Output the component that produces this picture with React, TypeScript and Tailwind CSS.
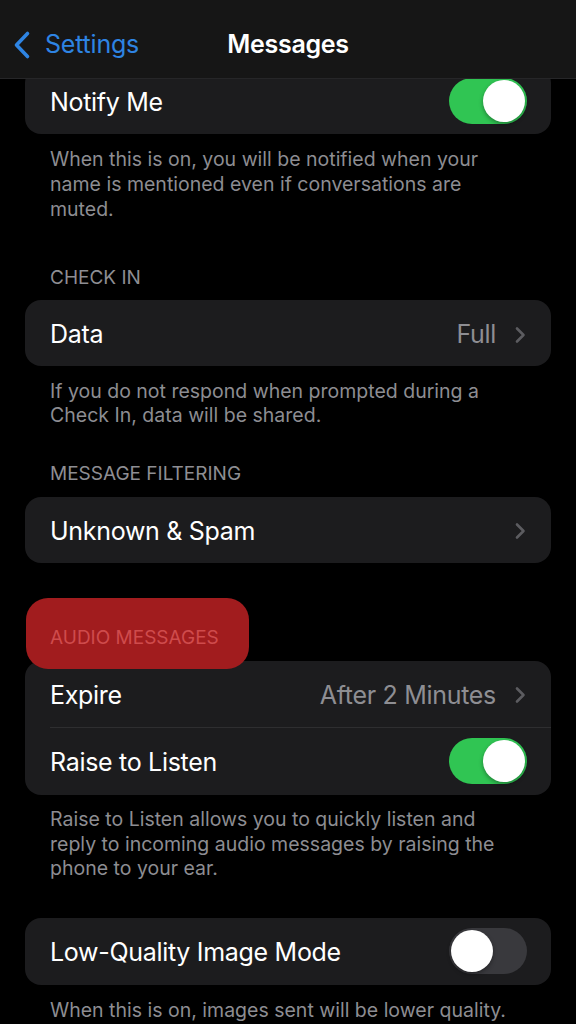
import React from "react";

const font = { fontFamily: "Inter, 'Noto Sans', 'Liberation Sans', sans-serif" };

function Toggle({ on }: { on: boolean }) {
  return (
    <div
      className={`flex h-[46px] w-[78px] items-center rounded-full p-[2px] ${
        on ? "justify-end bg-[#30c553]" : "justify-start bg-[#39393d]"
      }`}
    >
      <div className="h-[42px] w-[42px] rounded-full bg-white shadow-[0_2px_4px_rgba(0,0,0,0.35)]" />
    </div>
  );
}

function Chevron() {
  return (
    <svg width="14" height="18" viewBox="0 0 14 18" className="ml-[17px] mt-[3px]">
      <path d="M4 2.5 L10.5 9 L4 15.5" fill="none" stroke="#5c5c60" strokeWidth="2.6" strokeLinecap="round" strokeLinejoin="round" />
    </svg>
  );
}

function Row({
  label,
  value,
  chevron,
  toggle,
  h,
}: {
  label: string;
  value?: string;
  chevron?: boolean;
  toggle?: boolean | null;
  h: string;
}) {
  return (
    <div className={`flex items-center justify-between pl-[25px] pr-[24px] ${h}`}>
      <span className="pt-[4px] text-[25px] tracking-[-0.3px] text-white">{label}</span>
      <div className="flex items-center">
        {value && <span className="pt-[4px] text-[25px] tracking-[-0.3px] text-[#8e8e93]">{value}</span>}
        {chevron && <Chevron />}
        {toggle !== undefined && toggle !== null && <Toggle on={toggle} />}
      </div>
    </div>
  );
}

function Footer({ lines, className }: { lines: string[]; className: string }) {
  return (
    <div className={`px-[50px] text-[19.5px] leading-[24.5px] text-[#8d8d92] ${className}`}>
      {lines.map((l, i) => (
        <div key={i} className="whitespace-nowrap">
          {l}
        </div>
      ))}
    </div>
  );
}

function Header({ text, className }: { text: string; className: string }) {
  return (
    <div className={`px-[50px] text-[19px] leading-[25px] text-[#8e8e93] ${className}`}>{text}</div>
  );
}

export default function App() {
  return (
    <div className="h-[1024px] w-[576px] overflow-hidden bg-black" style={font}>
      <div className="relative z-10 flex h-[79px] items-center border-b border-[#262628] bg-[#161616] pt-[12px]">
        <div className="flex w-[160px] items-center pl-[12px]">
          <svg width="22" height="30" viewBox="0 0 22 30">
            <path d="M15.5 3.5 L4.5 15 L15.5 26.5" fill="none" stroke="#2e84e3" strokeWidth="3.6" strokeLinecap="round" strokeLinejoin="round" />
          </svg>
          <span className="ml-[11px] text-[25px] tracking-[-0.2px] text-[#2e84e3]">Settings</span>
        </div>
        <div className="flex-1 pr-[160px] text-center text-[25px] font-semibold tracking-[-0.3px] text-white">
          Messages
        </div>
      </div>

      <div className="mx-[25px] -mt-[12px] rounded-[16px] bg-[#1c1c1e]">
        <Row label="Notify Me" toggle={true} h="h-[67px]" />
      </div>
      <Footer
        className="mt-[12.5px] leading-[25px]"
        lines={[
          "When this is on, you will be notified when your",
          "name is mentioned even if conversations are",
          "muted.",
        ]}
      />

      <Header text="CHECK IN" className="mt-[43px]" />
      <div className="mx-[25px] mt-[10.5px] rounded-[16px] bg-[#1c1c1e]">
        <Row label="Data" value="Full" chevron h="h-[66px]" />
      </div>
      <Footer
        className="mt-[12.5px] leading-[24px]"
        lines={["If you do not respond when prompted during a", "Check In, data will be shared."]}
      />

      <Header text="MESSAGE FILTERING" className="mt-[34.5px]" />
      <div className="mx-[25px] mt-[10.5px] rounded-[16px] bg-[#1c1c1e]">
        <Row label="Unknown & Spam" chevron h="h-[66px]" />
      </div>

      <div className="relative mt-[61.5px]">
        <div className="relative z-10 px-[50px] pt-[1px] text-[19px] leading-[25px] text-[#cf4b4c]">AUDIO MESSAGES</div>
        <div className="mx-[25px] mt-[10.5px] rounded-[16px] bg-[#1c1c1e]">
          <Row label="Expire" value="After 2 Minutes" chevron h="h-[66px]" />
          <div className="ml-[25px] h-px bg-[#2e2e30]" />
          <Row label="Raise to Listen" toggle={true} h="h-[67px]" />
        </div>
        <div className="absolute left-[26px] top-[-26.5px] z-[5] h-[71px] w-[223px] rounded-[22px] bg-[#a11c1e]" />
      </div>
      <Footer
        className="mt-[12.5px]"
        lines={[
          "Raise to Listen allows you to quickly listen and",
          "reply to incoming audio messages by raising the",
          "phone to your ear.",
        ]}
      />

      <div className="mx-[25px] mt-[37px] rounded-[16px] bg-[#1c1c1e]">
        <Row label="Low-Quality Image Mode" toggle={false} h="h-[67px]" />
      </div>
      <Footer className="mt-[13px]" lines={["When this is on, images sent will be lower quality."]} />
    </div>
  );
}
